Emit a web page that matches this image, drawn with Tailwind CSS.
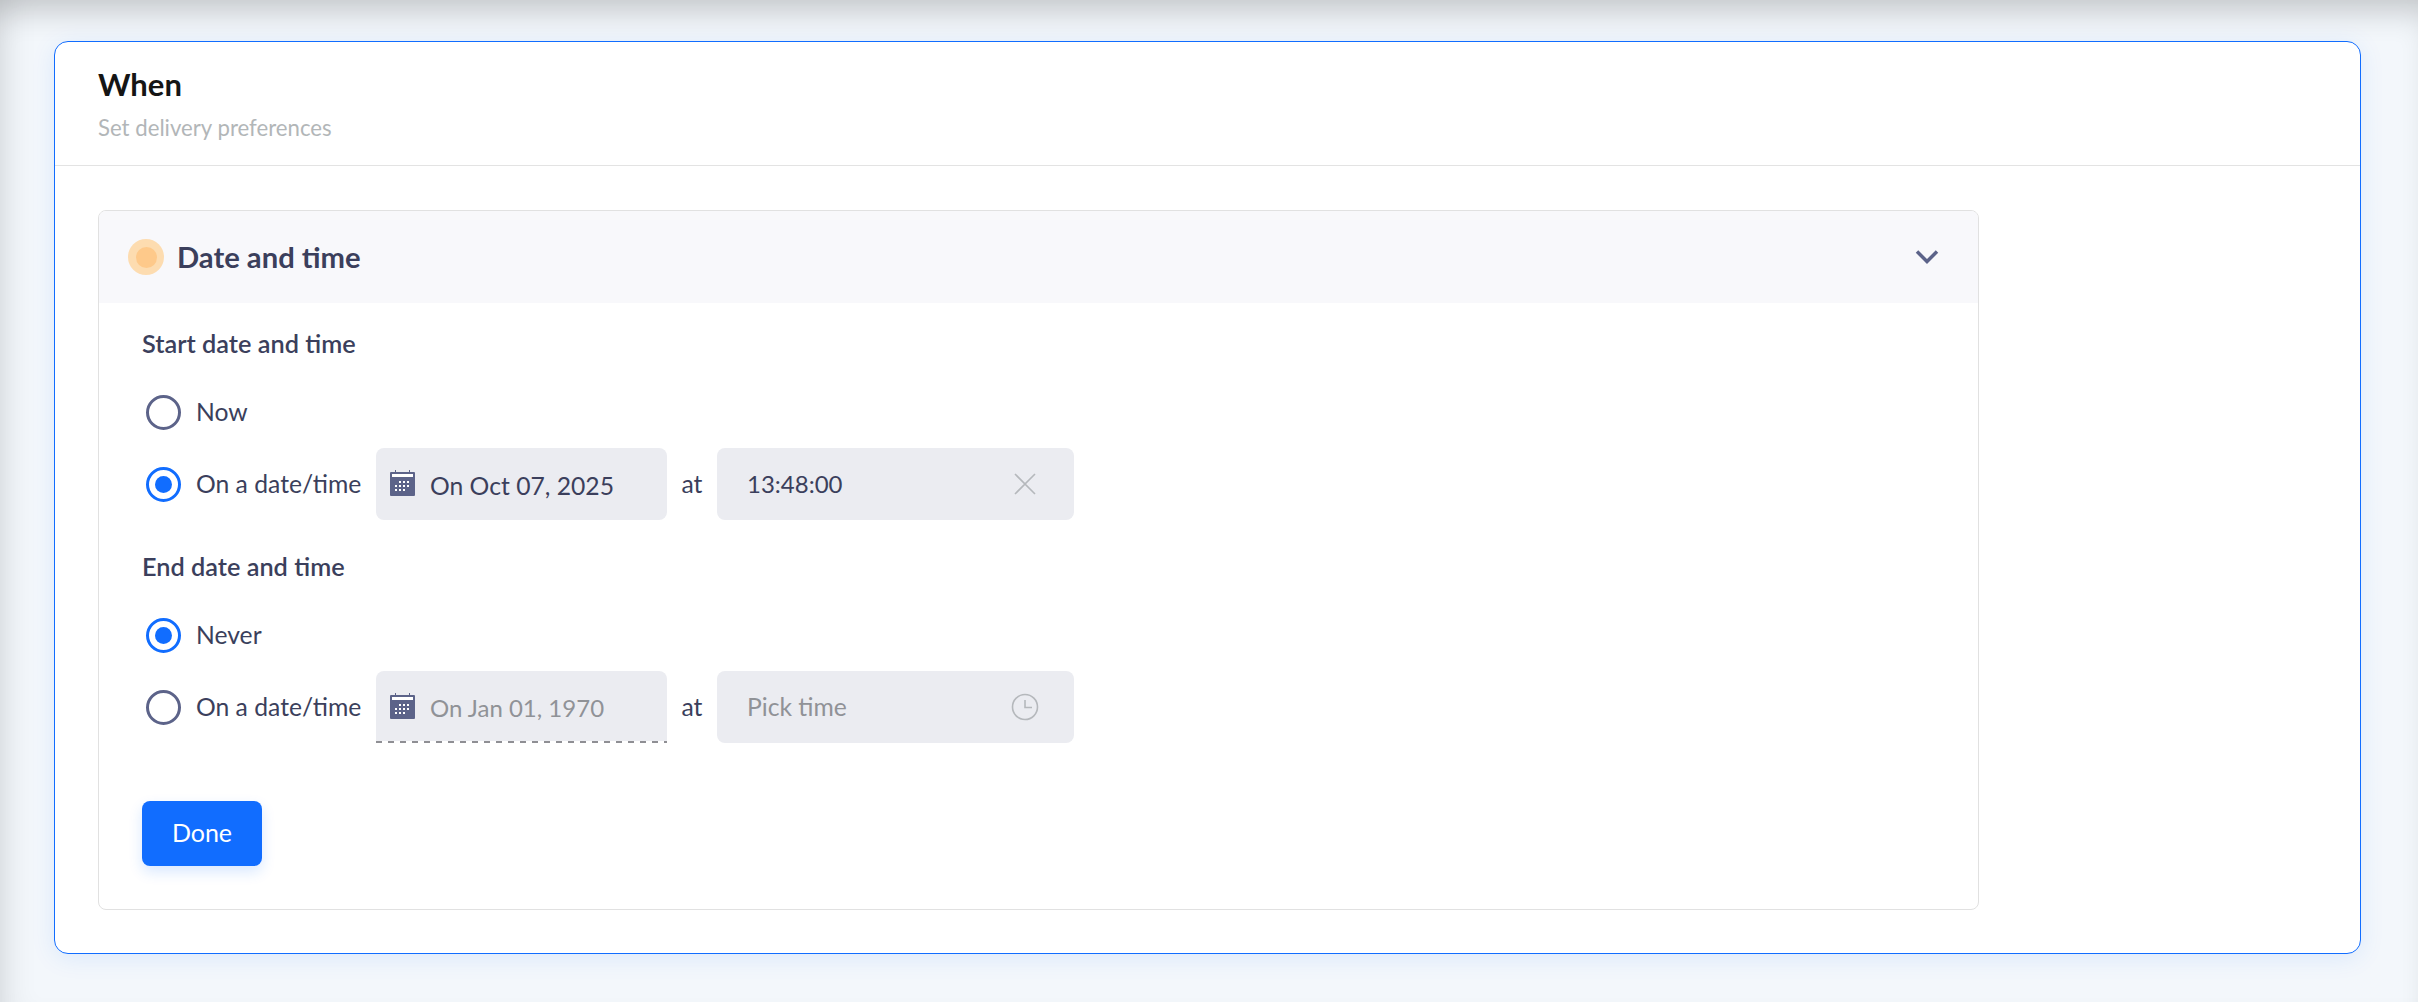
<!DOCTYPE html>
<html lang="en">
<head>
  <meta charset="UTF-8" />
  <title>When</title>
  <script src="https://cdn.jsdelivr.net/npm/@tailwindcss/browser@4"></script>
</head>
<body class="font-['Lato','Inter',sans-serif] overflow-hidden">

  <div class="h-[1002px] bg-[#f3f7fb] pt-[41px] pl-[54px] pr-[57px] shadow-[inset_0_26px_30px_-14px_rgba(0,0,0,0.19),inset_30px_0_28px_-18px_rgba(0,0,0,0.07)]">

    <div class="h-[913px] bg-white border border-[#116dff] rounded-[14px] shadow-[0_4px_24px_rgba(17,109,255,0.1)]">

      <!-- Card header -->
      <div class="h-[124px] border-b border-[#e3e3e3] pl-[43px] pt-[24px]">
        <h2 class="text-[31px] leading-[36px] font-bold text-[#151515]">When</h2>
        <p class="mt-[13px] text-[22.2px] leading-[26px] text-[#b2b6b8]">Set delivery preferences</p>
      </div>

      <div class="pl-[43px] pt-[44px]">
        <div class="w-[1881px] h-[700px] border border-[#e1e1e1] rounded-[8px] overflow-hidden">

          <!-- Section header -->
          <div class="h-[92px] bg-[#f8f8fb] flex items-center pl-[29px] pr-[39px]">
            <div class="w-[36px] h-[36px] rounded-full bg-[#fddcb0] flex items-center justify-center">
              <div class="w-[21px] h-[21px] rounded-full bg-[#fec98a]"></div>
            </div>
            <span class="ml-[13px] text-[29.2px] font-bold text-[#3b3f5c]">Date and time</span>
            <svg class="ml-auto" width="24" height="16" viewBox="0 0 24 16" fill="none" stroke="#5c6389" stroke-width="3.5"><path d="M2 2.5l10 10 10-10"/></svg>
          </div>

          <!-- Section body -->
          <div class="pl-[43px] pt-[26px] text-[24.7px] text-[#3b3f5c]">
            <h3 class="h-[30px] leading-[28px] text-[25.3px] font-semibold">Start date and time</h3>

            <div class="mt-[35px] h-[36px] flex items-center pl-[4px]">
              <span class="w-[35px] h-[35px] rounded-full border-[3px] border-[#5c6389]"></span>
              <span class="ml-[15px]">Now</span>
            </div>

            <div class="mt-[18px] h-[72px] flex items-center pl-[4px]">
              <span class="w-[35px] h-[35px] rounded-full border-[3px] border-[#116dff] flex items-center justify-center"><span class="w-[17px] h-[17px] rounded-full bg-[#116dff]"></span></span>
              <span class="ml-[15px] w-[180px]">On a date/time</span>
              <div class="w-[291px] h-[72px] bg-[#ebecf1] rounded-[8px] flex items-center pl-[14px]">
                <svg class="-mt-[2px]" width="25" height="26" viewBox="0 0 25 26"><path fill="#5c6389" d="M1 2h4V0h1v2h13V0h1v2h4a1 1 0 0 1 1 1v22a1 1 0 0 1-1 1H1a1 1 0 0 1-1-1V3a1 1 0 0 1 1-1z"/><rect x="2" y="4" width="21" height="3" fill="#fff"/><g fill="#fff"><rect x="9" y="11" width="2" height="2"/><rect x="13" y="11" width="2" height="2"/><rect x="17" y="11" width="2" height="2"/><rect x="5" y="15" width="2" height="2"/><rect x="9" y="15" width="2" height="2"/><rect x="13" y="15" width="2" height="2"/><rect x="17" y="15" width="2" height="2"/><rect x="5" y="19" width="2" height="2"/><rect x="9" y="19" width="2" height="2"/><rect x="13" y="19" width="2" height="2"/></g></svg>
                <span class="ml-[15px] mt-[3px]">On Oct 07, 2025</span>
              </div>
              <span class="w-[50px] text-center">at</span>
              <div class="w-[357px] h-[72px] bg-[#ebecf1] rounded-[8px] flex items-center pl-[30px] pr-[38px]">
                <span class="text-[24px]">13:48:00</span>
                <svg class="ml-auto" width="22" height="22" viewBox="0 0 22 22" fill="none" stroke="#b5b8bc" stroke-width="1.6"><path d="M1 1l20 20M21 1L1 21"/></svg>
              </div>
            </div>

            <h3 class="mt-[32px] h-[30px] leading-[29px] text-[25.3px] font-semibold">End date and time</h3>

            <div class="mt-[35px] h-[36px] flex items-center pl-[4px]">
              <span class="w-[35px] h-[35px] rounded-full border-[3px] border-[#116dff] flex items-center justify-center"><span class="w-[17px] h-[17px] rounded-full bg-[#116dff]"></span></span>
              <span class="ml-[15px]">Never</span>
            </div>

            <div class="mt-[18px] h-[72px] flex items-center pl-[4px]">
              <span class="w-[35px] h-[35px] rounded-full border-[3px] border-[#5c6389]"></span>
              <span class="ml-[15px] w-[180px]">On a date/time</span>
              <div class="relative w-[291px] h-[72px] bg-[#ebecf1] rounded-t-[8px] flex items-center pl-[14px]">
                <svg class="-mt-[2px]" width="25" height="26" viewBox="0 0 25 26"><path fill="#5c6389" d="M1 2h4V0h1v2h13V0h1v2h4a1 1 0 0 1 1 1v22a1 1 0 0 1-1 1H1a1 1 0 0 1-1-1V3a1 1 0 0 1 1-1z"/><rect x="2" y="4" width="21" height="3" fill="#fff"/><g fill="#fff"><rect x="9" y="11" width="2" height="2"/><rect x="13" y="11" width="2" height="2"/><rect x="17" y="11" width="2" height="2"/><rect x="5" y="15" width="2" height="2"/><rect x="9" y="15" width="2" height="2"/><rect x="13" y="15" width="2" height="2"/><rect x="17" y="15" width="2" height="2"/><rect x="5" y="19" width="2" height="2"/><rect x="9" y="19" width="2" height="2"/><rect x="13" y="19" width="2" height="2"/></g></svg>
                <span class="ml-[15px] mt-[2px] text-[24px] text-[#909297]">On Jan 01, 1970</span>
                <div class="absolute left-0 right-0 bottom-0 h-[2px] bg-[repeating-linear-gradient(90deg,#8f8f94_0,#8f8f94_6px,#ffffff_6px,#ffffff_12px)]"></div>
              </div>
              <span class="w-[50px] text-center">at</span>
              <div class="w-[357px] h-[72px] bg-[#ebecf1] rounded-[8px] flex items-center pl-[30px] pr-[35px]">
                <span class="text-[#909297]">Pick time</span>
                <svg class="ml-auto" width="28" height="28" viewBox="0 0 28 28" fill="none" stroke="#b5b8bc" stroke-width="1.6"><circle cx="14" cy="14" r="12.5"/><path d="M14 7v7.5h7"/></svg>
              </div>
            </div>

            <button class="mt-[58px] w-[120px] h-[65px] bg-[#116dff] text-white text-[25px] rounded-[8px] shadow-[0_6px_14px_rgba(17,109,255,0.16)]"><span class="relative -top-[1px]">Done</span></button>
          </div>

        </div>
      </div>
    </div>
  </div>

</body>
</html>
